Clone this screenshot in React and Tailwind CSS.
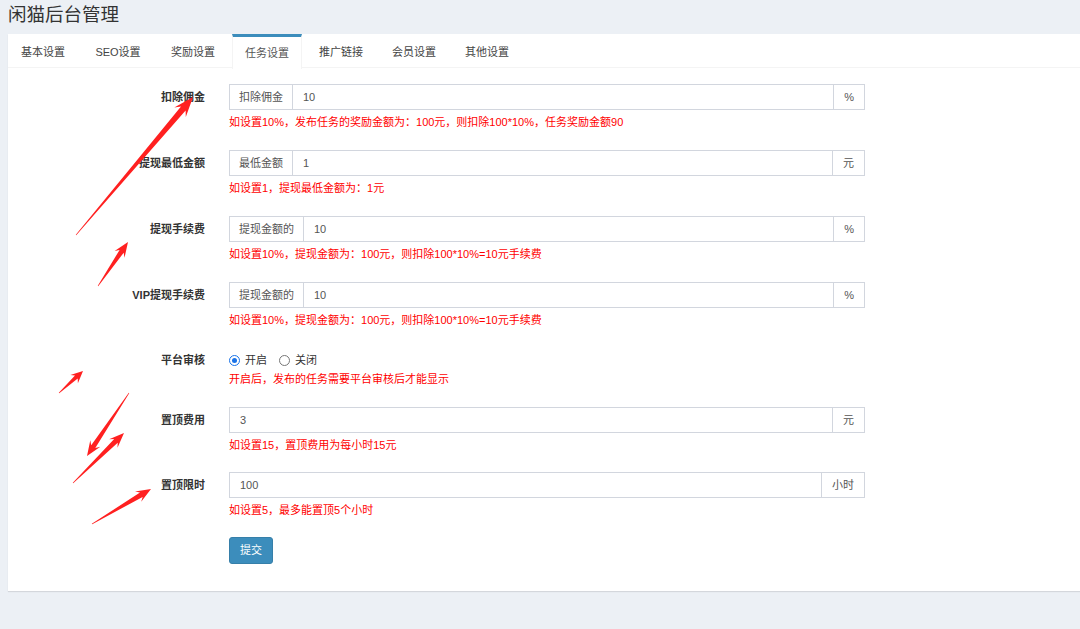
import React from 'react';

const FONT = { fontFamily: '"Liberation Sans", "Noto Sans CJK SC", sans-serif' };

const tabs = ['基本设置', 'SEO设置', '奖励设置', '任务设置', '推广链接', '会员设置', '其他设置'];

// red annotation arrows painted over the screenshot
const arrows = [
  { x1: 76, y1: 235, x2: 193, y2: 97, head: 20, hw: 7.5, sw: 3 },
  { x1: 98, y1: 286, x2: 128, y2: 242, head: 15, hw: 6, sw: 2.5 },
  { x1: 59, y1: 393, x2: 83, y2: 371, head: 12, hw: 5.5, sw: 2 },
  { x1: 129, y1: 393, x2: 87, y2: 456, head: 15, hw: 6, sw: 2.5 },
  { x1: 73, y1: 483, x2: 124, y2: 433, head: 15, hw: 6, sw: 2.5 },
  { x1: 92, y1: 524, x2: 151, y2: 489, head: 15, hw: 6, sw: 2.5 },
];

function Arrow({ x1, y1, x2, y2, head, hw, sw }) {
  const dx = x2 - x1;
  const dy = y2 - y1;
  const len = Math.hypot(dx, dy);
  const ux = dx / len;
  const uy = dy / len;
  const nx = -uy;
  const ny = ux;
  const p = (a, b) => `${a.toFixed(1)},${b.toFixed(1)}`;
  const jx = x2 - ux * head * 0.75;
  const jy = y2 - uy * head * 0.75;
  const wx = x2 - ux * head;
  const wy = y2 - uy * head;
  const pts = [
    p(x1 + nx * 0.3, y1 + ny * 0.3),
    p(jx + nx * sw, jy + ny * sw),
    p(wx + nx * hw, wy + ny * hw),
    p(x2, y2),
    p(wx - nx * hw, wy - ny * hw),
    p(jx - nx * sw, jy - ny * sw),
    p(x1 - nx * 0.3, y1 - ny * 0.3),
  ].join(' ');
  return <polygon points={pts} fill="#ff2020" />;
}

function InputGroup({ prefix, value, suffix }) {
  return (
    <div className="flex h-[26px] w-[636px] border border-[#d2d6de] text-[11px] text-[#555]">
      {prefix && (
        <div className="flex items-center border-r border-[#d2d6de] px-[9px]">{prefix}</div>
      )}
      <div className="flex flex-1 items-center px-[10px]">{value}</div>
      {suffix && (
        <div className="flex items-center border-l border-[#d2d6de] px-[10px]">{suffix}</div>
      )}
    </div>
  );
}

function Help({ children }) {
  return <div className="mt-[5px] text-[11px] leading-[15px] text-[#ff0000]">{children}</div>;
}

function Row({ label, children, help }) {
  return (
    <div className="mb-[20px]">
      <div className="flex items-center">
        <div className="w-[197px] text-right text-[11px] font-bold text-[#333]">{label}</div>
        <div className="ml-6">{children}</div>
      </div>
      <div className="ml-[221px]">{help}</div>
    </div>
  );
}

function Radio({ checked, label }) {
  return (
    <label className="flex items-center gap-[5px] text-[11px] text-[#333]">
      {checked ? (
        <span className="flex h-[11px] w-[11px] items-center justify-center rounded-full border-[1.5px] border-[#1a73e8]">
          <span className="h-[5px] w-[5px] rounded-full bg-[#1a73e8]" />
        </span>
      ) : (
        <span className="h-[11px] w-[11px] rounded-full border border-[#767676]" />
      )}
      {label}
    </label>
  );
}

export default function App() {
  return (
    <div className="relative min-h-[629px] w-[1080px] bg-[#ecf0f5]" style={FONT}>
      <div className="h-[34px] pl-2 text-[18.5px] leading-[29px] text-[#333]">闲猫后台管理</div>

      <div className="ml-2 bg-white pb-[27px] shadow-[0_1px_1px_rgba(0,0,0,0.1)]">
        {/* tabs */}
        <div className="flex h-[34px] border-b border-[#f4f4f4] pl-px">
          {tabs.map((t) => (
            <div
              key={t}
              className={
                t === '任务设置'
                  ? 'mr-[5px] -mb-px flex h-[35px] items-center border-x border-t-[3px] border-x-[#f4f4f4] border-t-[#3c8dbc] bg-white px-3 text-[11px] text-[#555]'
                  : t === 'SEO设置'
                    ? 'mr-[5px] flex h-[34px] w-[72px] items-center justify-center border-t-[3px] border-t-transparent text-[11px] text-[#444]'
                    : 'mr-[5px] flex h-[34px] items-center border-t-[3px] border-t-transparent px-3 text-[11px] text-[#444]'
              }
            >
              {t}
            </div>
          ))}
        </div>

        <div className="pt-4">
          <Row label="扣除佣金" help={<Help>如设置10%，发布任务的奖励金额为：100元，则扣除100*10%，任务奖励金额90</Help>}>
            <InputGroup prefix="扣除佣金" value="10" suffix="%" />
          </Row>
          <Row label="提现最低金额" help={<Help>如设置1，提现最低金额为：1元</Help>}>
            <InputGroup prefix="最低金额" value="1" suffix="元" />
          </Row>
          <Row label="提现手续费" help={<Help>如设置10%，提现金额为：100元，则扣除100*10%=10元手续费</Help>}>
            <InputGroup prefix="提现金额的" value="10" suffix="%" />
          </Row>
          <Row label="VIP提现手续费" help={<Help>如设置10%，提现金额为：100元，则扣除100*10%=10元手续费</Help>}>
            <InputGroup prefix="提现金额的" value="10" suffix="%" />
          </Row>

          <div className="mb-[20px]">
            <div className="flex h-[24px] items-center">
              <div className="w-[197px] text-right text-[11px] font-bold text-[#333]">平台审核</div>
              <div className="ml-6 flex items-center gap-3">
                <Radio checked label="开启" />
                <Radio label="关闭" />
              </div>
            </div>
            <div className="ml-[221px] text-[11px] leading-[15px] text-[#ff0000]">
              开启后，发布的任务需要平台审核后才能显示
            </div>
          </div>

          <Row label="置顶费用" help={<Help>如设置15，置顶费用为每小时15元</Help>}>
            <InputGroup value="3" suffix="元" />
          </Row>
          <div className="-mt-px">
            <Row label="置顶限时" help={<Help>如设置5，最多能置顶5个小时</Help>}>
              <InputGroup value="100" suffix="小时" />
            </Row>
          </div>

          <div className="-mt-[1px] ml-[221px]">
            <button className="h-[27px] rounded-[3px] border border-[#367fa9] bg-[#3c8dbc] px-[10px] text-[11px] text-white">
              提交
            </button>
          </div>
        </div>
      </div>

      <svg className="pointer-events-none absolute left-0 top-0" width="1080" height="629">
        {arrows.map((a, i) => (
          <Arrow key={i} {...a} />
        ))}
      </svg>
    </div>
  );
}
